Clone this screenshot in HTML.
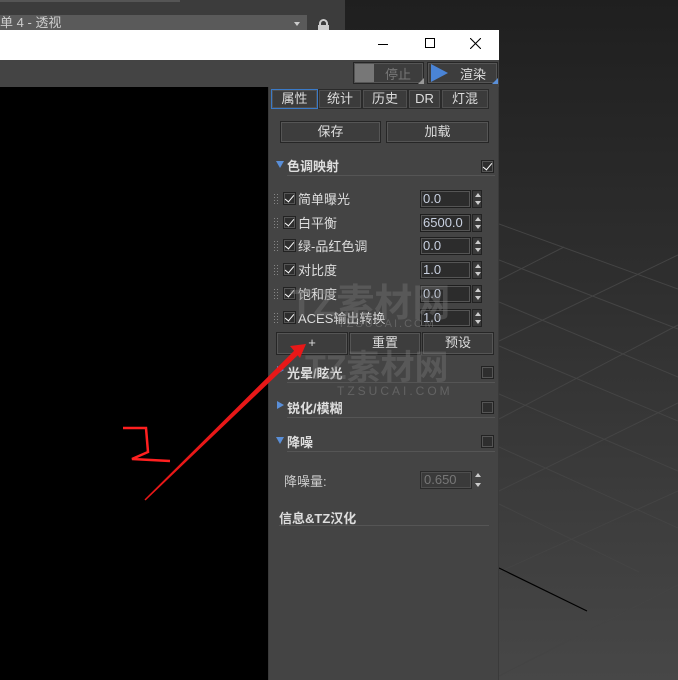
<!DOCTYPE html>
<html><head><meta charset="utf-8"><style>
*{margin:0;padding:0;box-sizing:border-box}
body{width:678px;height:680px;overflow:hidden;position:relative;background:#333;font-family:"Liberation Sans","Noto Sans CJK SC",sans-serif;font-size:12px;color:#ddd}
.a{position:absolute}
.btn{position:absolute;background:#3d3d3d;border:1px solid #262626;box-shadow:inset 0 0 0 1px #555;color:#ddd;text-align:center;font-size:13px}
.cb{position:absolute;width:13px;height:13px;background:#2e2e2e;border:1px solid #222;box-shadow:inset 0 0 0 1px #555}
.cb.on::after{content:"";position:absolute;left:3px;top:0px;width:4px;height:8px;border:solid #fff;border-width:0 1.5px 1.5px 0;transform:rotate(40deg)}
.row{position:absolute;left:272px;width:222px;height:20px}
.grip{position:absolute;left:2px;top:5px;width:4px;height:10px;background:repeating-linear-gradient(#888 0 1px,transparent 1px 3px);-webkit-mask:linear-gradient(90deg,#000 1px,transparent 1px 3px,#000 3px)}
.inp{position:absolute;left:148px;top:1px;width:51px;height:18px;background:#2c2c2c;border:1px solid #1e1e1e;box-shadow:inset 0 0 0 1px #555;color:#c8d0e0;font-size:13px;padding-left:2px;line-height:15px}
.sp{position:absolute;left:200px;top:1px;width:10px;height:18px;background:#3a3a3a;border:1px solid #222}
.sp::before{content:"";position:absolute;left:2px;top:2px;border:3px solid transparent;border-bottom:4px solid #ccc;border-top:0}
.sp::after{content:"";position:absolute;left:2px;bottom:2px;border:3px solid transparent;border-top:4px solid #ccc;border-bottom:0}
.lbl{position:absolute;left:26px;top:0px;font-size:13px;color:#ddd}
.hd{position:absolute;left:275px;width:220px;height:20px;font-weight:bold;font-size:13px;color:#ddd}
.hd .t{position:absolute;left:12px;top:-1px}
.hd .line{position:absolute;left:12px;right:0;top:18px;height:1px;background:#2a2a2a;border-bottom:1px solid #555}
.tri-d{position:absolute;left:1px;top:4px;border:4px solid transparent;border-top:7px solid #5a8fd8;border-bottom:0}
.tri-r{position:absolute;left:2px;top:2px;border:4px solid transparent;border-left:7px solid #5a8fd8;border-right:0}
.tab{position:absolute;top:89px;height:20px;background:#3b3b3b;border:1px solid #2a2a2a;box-shadow:inset 0 0 0 1px #4f4f4f;text-align:center;font-size:13px;line-height:17px}
</style></head><body>
<div class="a" style="left:0;top:0;width:678px;height:680px;background:linear-gradient(180deg,#1f1f1f 0%,#2e2e2e 40%,#474747 100%)"></div>
<svg class="a" style="left:499px;top:0" width="179" height="680">
<g stroke="#444" stroke-width="1" fill="none">
<line x1="0" y1="224" x2="179" y2="289"/><line x1="0" y1="260" x2="179" y2="329"/><line x1="0" y1="302" x2="179" y2="377"/><line x1="0" y1="346" x2="179" y2="421"/><line x1="0" y1="394" x2="179" y2="471"/><line x1="0" y1="447" x2="179" y2="528"/><line x1="0" y1="504" x2="140" y2="572"/>
<line x1="0" y1="280" x2="65" y2="247"/><line x1="0" y1="341" x2="179" y2="255"/><line x1="0" y1="419" x2="179" y2="325"/><line x1="0" y1="491" x2="179" y2="403"/><line x1="0" y1="572" x2="179" y2="491"/><line x1="0" y1="676" x2="179" y2="585"/>
</g>
<line x1="0" y1="568" x2="88" y2="611" stroke="#000" stroke-width="1.2"/>
</svg>
<div class="a" style="left:0;top:0;width:345px;height:30px;background:#3c3c3c"></div>
<div class="a" style="left:0;top:0;width:180px;height:2px;background:#555"></div>
<div class="a" style="left:0;top:15px;width:307px;height:15px;background:#5a5a5a;color:#ccc;font-size:13px;line-height:15px">单 4 - 透视</div>
<div class="a" style="left:294px;top:22px;border:3px solid transparent;border-top:4px solid #ccc"></div>
<div class="a" style="left:319px;top:19px;width:9px;height:8px;border:2px solid #ccc;border-bottom:0;border-radius:5px 5px 0 0"></div>
<div class="a" style="left:318px;top:25px;width:11px;height:5px;background:#ccc"></div>
<div class="a" style="left:0;top:30px;width:499px;height:30px;background:#fff"></div>
<div class="a" style="left:378px;top:44px;width:10px;height:1px;background:#000"></div>
<div class="a" style="left:425px;top:38px;width:10px;height:10px;border:1px solid #000"></div>
<svg class="a" style="left:470px;top:38px" width="11" height="11"><path d="M0 0L11 11M11 0L0 11" stroke="#000" stroke-width="1.1"/></svg>
<div class="a" style="left:0;top:60px;width:499px;height:27px;background:#444"></div>
<div class="a" style="left:0;top:87px;width:268px;height:593px;background:#000"></div>
<div class="a" style="left:268px;top:87px;width:231px;height:593px;background:#444;border-left:1px solid #3a3a3a;border-right:1px solid #3a3a3a"></div>
<div class="btn" style="left:353px;top:62px;width:71px;height:22px"></div>
<div class="a" style="left:355px;top:64px;width:19px;height:18px;background:#777"></div>
<div class="a" style="left:385px;top:64px;color:#777;font-size:13px">停止</div>
<div class="a" style="left:418px;top:78px;border:3px solid transparent;border-right-color:#999;border-bottom-color:#999"></div>
<div class="btn" style="left:427px;top:62px;width:71px;height:22px"></div>
<div class="a" style="left:431px;top:64px;border:9px solid transparent;border-left:17px solid #4a84d6;border-right:0"></div>
<div class="a" style="left:460px;top:64px;color:#ddd;font-size:13px">渲染</div>
<div class="a" style="left:492px;top:78px;border:3px solid transparent;border-right-color:#5a8fd8;border-bottom-color:#5a8fd8"></div>
<div class="tab" style="left:271px;width:47px;border-color:#3a7ac8">属性</div>
<div class="tab" style="left:318px;width:44px">统计</div>
<div class="tab" style="left:362px;width:46px">历史</div>
<div class="tab" style="left:408px;width:33px">DR</div>
<div class="tab" style="left:441px;width:48px">灯混</div>
<div class="btn" style="left:280px;top:121px;width:101px;height:22px;line-height:19px">保存</div>
<div class="btn" style="left:386px;top:121px;width:103px;height:22px;line-height:19px">加载</div>
<div class="hd" style="top:157px"><div class="tri-d"></div><div class="t">色调映射</div><div class="line"></div></div>
<div class="cb on" style="left:481px;top:160px"></div>
<div class="row" style="top:189px"><div class="grip"></div><div class="cb on" style="left:11px;top:3px"></div><div class="lbl">简单曝光</div><div class="inp">0.0</div><div class="sp"></div></div>
<div class="row" style="top:213px"><div class="grip"></div><div class="cb on" style="left:11px;top:3px"></div><div class="lbl">白平衡</div><div class="inp">6500.0</div><div class="sp"></div></div>
<div class="row" style="top:236px"><div class="grip"></div><div class="cb on" style="left:11px;top:3px"></div><div class="lbl">绿-品红色调</div><div class="inp">0.0</div><div class="sp"></div></div>
<div class="row" style="top:260px"><div class="grip"></div><div class="cb on" style="left:11px;top:3px"></div><div class="lbl">对比度</div><div class="inp">1.0</div><div class="sp"></div></div>
<div class="row" style="top:284px"><div class="grip"></div><div class="cb on" style="left:11px;top:3px"></div><div class="lbl">饱和度</div><div class="inp">0.0</div><div class="sp"></div></div>
<div class="row" style="top:308px"><div class="grip"></div><div class="cb on" style="left:11px;top:3px"></div><div class="lbl">ACES输出转换</div><div class="inp">1.0</div><div class="sp"></div></div>
<div class="btn" style="left:276px;top:332px;width:72px;height:23px;line-height:20px">+</div>
<div class="btn" style="left:349px;top:332px;width:72px;height:23px;line-height:20px">重置</div>
<div class="btn" style="left:422px;top:332px;width:72px;height:23px;line-height:20px">预设</div>
<div class="hd" style="top:364px"><div class="tri-r"></div><div class="t">光晕/眩光</div><div class="line"></div></div>
<div class="cb" style="left:481px;top:366px"></div>
<div class="hd" style="top:399px"><div class="tri-r"></div><div class="t">锐化/模糊</div><div class="line"></div></div>
<div class="cb" style="left:481px;top:401px"></div>
<div class="hd" style="top:433px"><div class="tri-d"></div><div class="t">降噪</div><div class="line"></div></div>
<div class="cb" style="left:481px;top:435px"></div>
<div class="a" style="left:284px;top:471px;font-size:13px;color:#ccc">降噪量:</div>
<div class="a" style="left:420px;top:471px;width:52px;height:18px;background:#3a3a3a;border:1px solid #2a2a2a;box-shadow:inset 0 0 0 1px #4e4e4e;color:#777;font-size:13px;padding-left:3px;line-height:16px">0.650</div>
<div class="sp" style="left:473px;top:471px;background:#444;border:none"></div>
<div class="a" style="left:279px;top:508px;font-weight:bold;font-size:13px">信息&amp;TZ汉化</div>
<div class="a" style="left:279px;top:525px;width:210px;height:1px;background:#2a2a2a;border-bottom:1px solid #555"></div>
<div class="a" style="left:290px;top:272px;font-size:38px;font-weight:bold;color:rgba(120,120,120,.4)">TZ素材网</div>
<div class="a" style="left:338px;top:318px;font-size:11px;letter-spacing:2px;color:rgba(130,130,130,.5)">TZSUCAI.COM</div>
<div class="a" style="left:305px;top:340px;font-size:34px;font-weight:bold;color:rgba(120,120,120,.4)">TZ素材网</div>
<div class="a" style="left:337px;top:384px;font-size:12px;letter-spacing:3px;color:rgba(130,130,130,.5)">TZSUCAI.COM</div>
<svg class="a" style="left:0;top:0" width="678" height="680">
<path d="M145 500 L300 352 L303 346 L296 350 Z" fill="#e81818" stroke="#e81818" stroke-width="1.5"/>
<path d="M290 346 L306 344 L300 358 Z" fill="#e81818"/>
<path d="M123 428 L146 428 L148 452 L132 459 L170 461" fill="none" stroke="#ff2020" stroke-width="2.5"/>
</svg>
</body></html>
